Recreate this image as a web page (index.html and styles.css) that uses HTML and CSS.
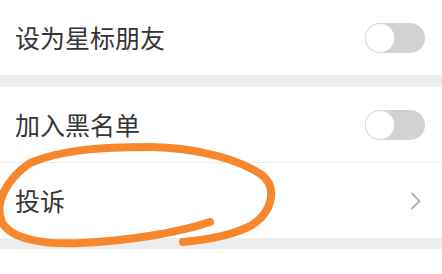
FILE: index.html
```html
<!DOCTYPE html>
<html lang="zh-CN">
<head>
<meta charset="utf-8">
<link rel="stylesheet" href="styles.css">
</head>
<body>
<div class="page">
  <div class="group">
    <div class="row">
      <span class="label">设为星标朋友</span>
      <span class="switch"><span class="knob"></span></span>
    </div>
  </div>
  <div class="gap"></div>
  <div class="group">
    <div class="row">
      <span class="label">加入黑名单</span>
      <span class="switch"><span class="knob"></span></span>
    </div>
    <div class="divider"></div>
    <div class="row">
      <span class="label">投诉</span>
      <svg class="chev" width="12" height="18" viewBox="0 0 12 18"><path d="M2 1.5 L9.5 9 L2 16.5" fill="none" stroke="#b2b2b2" stroke-width="1.8" stroke-linecap="round" stroke-linejoin="round"/></svg>
    </div>
  </div>
  <div class="gap gap2"></div>
  <div class="foot"></div>
  <svg class="mark" width="442" height="274" viewBox="0 0 442 274">
    <path d="M210,222 C180,232 130,241 80,243 C40,245 10,238 2,222 C-6,205 5,180 30,163 C60,150 100,147 150,147 C200,148 240,160 262,175 C278,188 272,212 252,225 C232,236 205,240 183,242" fill="none" stroke="#f7862c" stroke-width="8" stroke-linecap="round" stroke-linejoin="round"/>
  </svg>
</div>
</body>
</html>
```
FILE: styles.css
```css
html, body {
  margin: 0;
  padding: 0;
  background: #ffffff;
}
.page {
  position: relative;
  width: 442px;
  height: 274px;
  overflow: hidden;
  font-family: "Noto Sans CJK SC", "Noto Sans", sans-serif;
}
.group {
  background: #ffffff;
}
.row {
  height: 75px;
  display: flex;
  align-items: center;
  justify-content: space-between;
  padding: 0 17px 0 15px;
}
.label {
  font-size: 25px;
  color: #353535;
  line-height: 1;
}
.switch {
  width: 60px;
  height: 30px;
  border-radius: 15px;
  background: #d2d2d2;
  display: flex;
  align-items: center;
  padding: 0 1px;
  box-sizing: border-box;
}
.knob {
  width: 28px;
  height: 28px;
  border-radius: 50%;
  background: #ffffff;
  box-shadow: 0 0 0 1px #dcdcdc;
}
.chev {
  margin-right: 3px;
}
.divider {
  height: 1px;
  background: #ececec;
}
.gap {
  height: 12px;
  background: #ededed;
}
.gap2 {
  height: 11px;
}
.foot {
  height: 40px;
  background: #ffffff;
}
.mark {
  position: absolute;
  left: 0;
  top: 0;
  pointer-events: none;
}
```
